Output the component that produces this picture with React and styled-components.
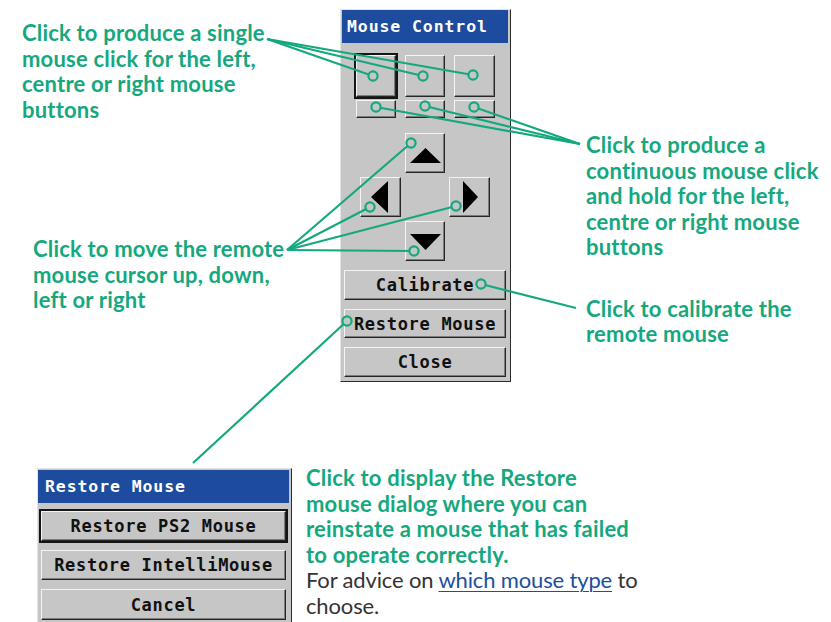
import React from "react";
import styled, { createGlobalStyle, css } from "styled-components";

const GREEN = "#15a87e";

const GlobalStyle = createGlobalStyle`
  html, body {
    margin: 0;
    padding: 0;
    background: #fff;
  }
  body {
    font-family: Lato, "Open Sans", sans-serif;
  }
`;

const Canvas = styled.div`
  position: relative;
  width: 831px;
  height: 622px;
  overflow: hidden;
  background: #fff;
`;

const Row = styled.div`
  display: flex;
  height: ${p => (p.$h ? `${p.$h}px` : "auto")};
`;

const Column = styled.div`
  display: flex;
  flex-direction: column;
  width: ${p => (p.$w ? `${p.$w}px` : "auto")};
  flex: ${p => (p.$w ? "none" : 1)};
  padding-top: ${p => p.$top || 0}px;
  box-sizing: border-box;
`;

const Callout = styled.div`
  margin: ${p => p.$top || 0}px 0 0 ${p => p.$left || 0}px;
  font-size: 22px;
  line-height: 25.5px;
  font-weight: 700;
  letter-spacing: 0.2px;
  color: ${GREEN};
  white-space: nowrap;
`;

const Plain = styled.span`
  display: block;
  font-weight: 400;
  letter-spacing: -0.15px;
  color: #333;
`;

const Link = styled.a`
  color: #1d4f9f;
  text-decoration: underline;
  text-decoration-thickness: 1px;
  text-underline-offset: 3px;
`;

const Window = styled.div`
  box-sizing: border-box;
  width: ${p => p.$w}px;
  height: ${p => (p.$h ? `${p.$h}px` : "auto")};
  margin: ${p => p.$top}px 0 0 ${p => p.$left || 0}px;
  flex: none;
  display: flex;
  flex-direction: column;
  align-items: center;
  background: #c6c6c6;
  border: 1px solid;
  border-color: #e4e4e4 #2c2c2c #2c2c2c #e4e4e4;
  padding: ${p => p.$pad};
`;

const TitleBar = styled.div`
  align-self: stretch;
  height: 33px;
  display: flex;
  align-items: center;
  padding-left: ${p => p.$indent}px;
  background: #1d4c9e;
  color: #fff;
  font-family: "DejaVu Sans Mono", monospace;
  font-weight: 700;
  font-size: 16.5px;
  letter-spacing: 0.9px;
  white-space: nowrap;
`;

const Bevel = styled.div`
  box-sizing: border-box;
  flex: none;
  width: ${p => p.$w}px;
  height: ${p => p.$h}px;
  margin-top: ${p => p.$top || 0}px;
  display: flex;
  align-items: center;
  justify-content: center;
  background: #c6c6c6;
  border-style: solid;
  border-width: 1px;
  border-color: #f4f4f4 #262626 #262626 #f4f4f4;
  box-shadow: inset -1px -1px 0 #7c7c7c;
  color: #111;
  font-family: "DejaVu Sans Mono", monospace;
  font-weight: 700;
  font-size: 17px;
  letter-spacing: 0.7px;
  white-space: nowrap;
  ${p =>
    p.$focus &&
    css`
      outline: 2px solid #151515;
    `}
`;

const ButtonRow = styled.div`
  display: flex;
  justify-content: center;
  gap: ${p => p.$gap}px;
  margin-top: ${p => p.$top || 0}px;
`;

const Arrow = styled.svg`
  display: block;
  fill: #000;
  transform: translate(${p => p.$dx || 0}px, ${p => p.$dy || 0}px);
`;

const Overlay = styled.svg`
  position: absolute;
  left: 0;
  top: 0;
  pointer-events: none;
`;

const links = [
  { from: [267, 39], to: [[373, 76], [423, 76], [473, 75]] },
  { from: [580, 144], to: [[376, 107], [425, 106], [474, 107]] },
  { from: [287, 250], to: [[411, 143], [370, 207], [456, 206], [414, 251]] },
  { from: [576, 308], to: [[481, 284]] },
  { from: [193, 463], to: [[347, 321]] },
];

const Connectors = () => (
  <Overlay width="831" height="622" viewBox="0 0 831 622">
    {links.map((l, i) =>
      l.to.map(([x, y], j) => (
        <line
          key={`l${i}-${j}`}
          x1={l.from[0]}
          y1={l.from[1]}
          x2={x}
          y2={y}
          stroke={GREEN}
          strokeWidth="2.2"
        />
      ))
    )}
    {links.map((l, i) =>
      l.to.map(([x, y], j) => (
        <circle
          key={`c${i}-${j}`}
          cx={x}
          cy={y}
          r="4.6"
          fill="#c6c6c6"
          stroke={GREEN}
          strokeWidth="2.2"
        />
      ))
    )}
  </Overlay>
);

const MouseControl = () => (
  <Window $w={171} $h={373} $top={9} $pad="0 2px 0 1px">
    <TitleBar $indent={5}>Mouse Control</TitleBar>
    <ButtonRow $gap={9} $top={12}>
      <Bevel $w={40} $h={42} $focus />
      <Bevel $w={40} $h={42} />
      <Bevel $w={41} $h={42} />
    </ButtonRow>
    <ButtonRow $gap={9} $top={3}>
      <Bevel $w={40} $h={18} />
      <Bevel $w={40} $h={18} />
      <Bevel $w={41} $h={18} />
    </ButtonRow>
    <Bevel $w={40} $h={40} $top={15}>
      <Arrow width="31" height="15" $dy={2}>
        <polygon points="0,15 15.5,0 31,15" />
      </Arrow>
    </Bevel>
    <ButtonRow $gap={48} $top={4}>
      <Bevel $w={41} $h={40}>
        <Arrow width="17" height="32" $dx={-1}>
          <polygon points="17,0 0,16 17,32" />
        </Arrow>
      </Bevel>
      <Bevel $w={41} $h={40}>
        <Arrow width="15" height="32" $dx={1}>
          <polygon points="0,0 15,16 0,32" />
        </Arrow>
      </Bevel>
    </ButtonRow>
    <Bevel $w={40} $h={40} $top={4}>
      <Arrow width="31" height="16" $dy={1}>
        <polygon points="0,0 31,0 15.5,16" />
      </Arrow>
    </Bevel>
    <Bevel $w={162} $h={30} $top={9}>Calibrate</Bevel>
    <Bevel $w={162} $h={29} $top={9}>Restore Mouse</Bevel>
    <Bevel $w={162} $h={30} $top={9}>Close</Bevel>
  </Window>
);

const RestoreDialog = () => (
  <Window $w={255} $top={86} $left={37} $pad="1px 2px 10px 0">
    <TitleBar $indent={7}>Restore Mouse</TitleBar>
    <Bevel $w={245} $h={30} $top={8} $focus>
      Restore PS2 Mouse
    </Bevel>
    <Bevel $w={245} $h={30} $top={9}>
      Restore IntelliMouse
    </Bevel>
    <Bevel $w={245} $h={31} $top={9}>
      Cancel
    </Bevel>
  </Window>
);

const App = () => (
  <Canvas>
    <GlobalStyle />
    <Row $h={382}>
      <Column $w={340} $top={20}>
        <Callout $left={22}>
          Click to produce a single
          <br />
          mouse click for the left,
          <br />
          centre or right mouse
          <br />
          buttons
        </Callout>
        <Callout $left={33} $top={114}>
          Click to move the remote
          <br />
          mouse cursor up, down,
          <br />
          left or right
        </Callout>
      </Column>
      <MouseControl />
      <Column $top={132}>
        <Callout $left={75}>
          Click to produce a
          <br />
          continuous mouse click
          <br />
          and hold for the left,
          <br />
          centre or right mouse
          <br />
          buttons
        </Callout>
        <Callout $left={75} $top={36}>
          Click to calibrate the
          <br />
          remote mouse
        </Callout>
      </Column>
    </Row>
    <Row>
      <RestoreDialog />
      <Callout $left={14} $top={83}>
        Click to display the Restore
        <br />
        mouse dialog where you can
        <br />
        reinstate a mouse that has failed
        <br />
        to operate correctly.
        <Plain>
          For advice on <Link href="#">which mouse type</Link> to
          <br />
          choose.
        </Plain>
      </Callout>
    </Row>
    <Connectors />
  </Canvas>
);

export default App;
